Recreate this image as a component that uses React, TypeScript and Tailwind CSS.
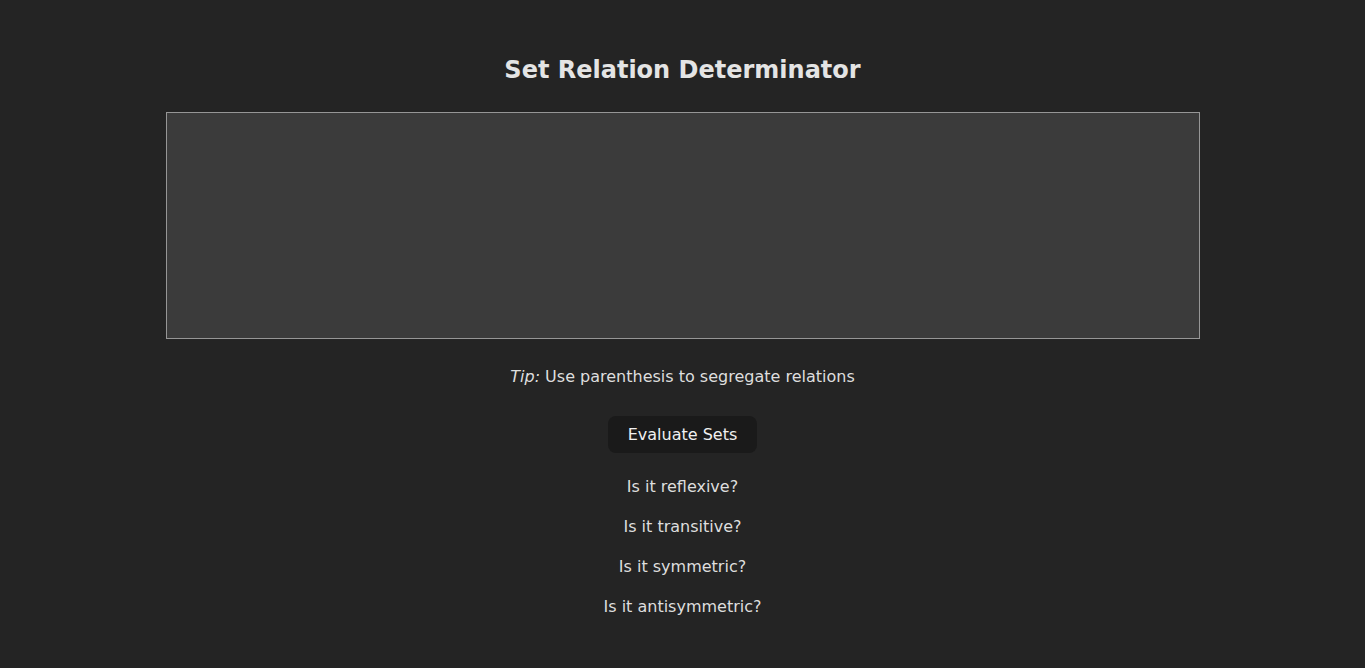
const questions = [
  "Is it reflexive?",
  "Is it transitive?",
  "Is it symmetric?",
  "Is it antisymmetric?",
];

export default function App() {
  return (
    <div
      className="min-h-screen bg-[#242424] text-[#dedede] flex flex-col items-center pt-[56px]"
      style={{ fontFamily: '"DejaVu Sans", sans-serif' }}
    >
      <h1 className="text-[24px] leading-[28px] font-bold text-[#e4e4e4]">
        Set Relation Determinator
      </h1>

      <textarea className="mt-[28px] w-[1034px] h-[227px] bg-[#3b3b3b] border border-[#969696] resize-none outline-none text-[#dedede] p-1" />

      <p className="mt-[26px] text-[16px] leading-[24px]">
        <em>Tip:</em> Use parenthesis to segregate relations
      </p>

      <button className="mt-[27px] h-[37px] px-[20px] rounded-lg bg-[#1a1a1a] text-[16px] text-[#f0f0f0]">
        Evaluate Sets
      </button>

      <div className="mt-[22px] flex flex-col items-center gap-4">
        {questions.map((q) => (
          <p key={q} className="text-[16px] leading-[24px]">
            {q}
          </p>
        ))}
      </div>
    </div>
  );
}
